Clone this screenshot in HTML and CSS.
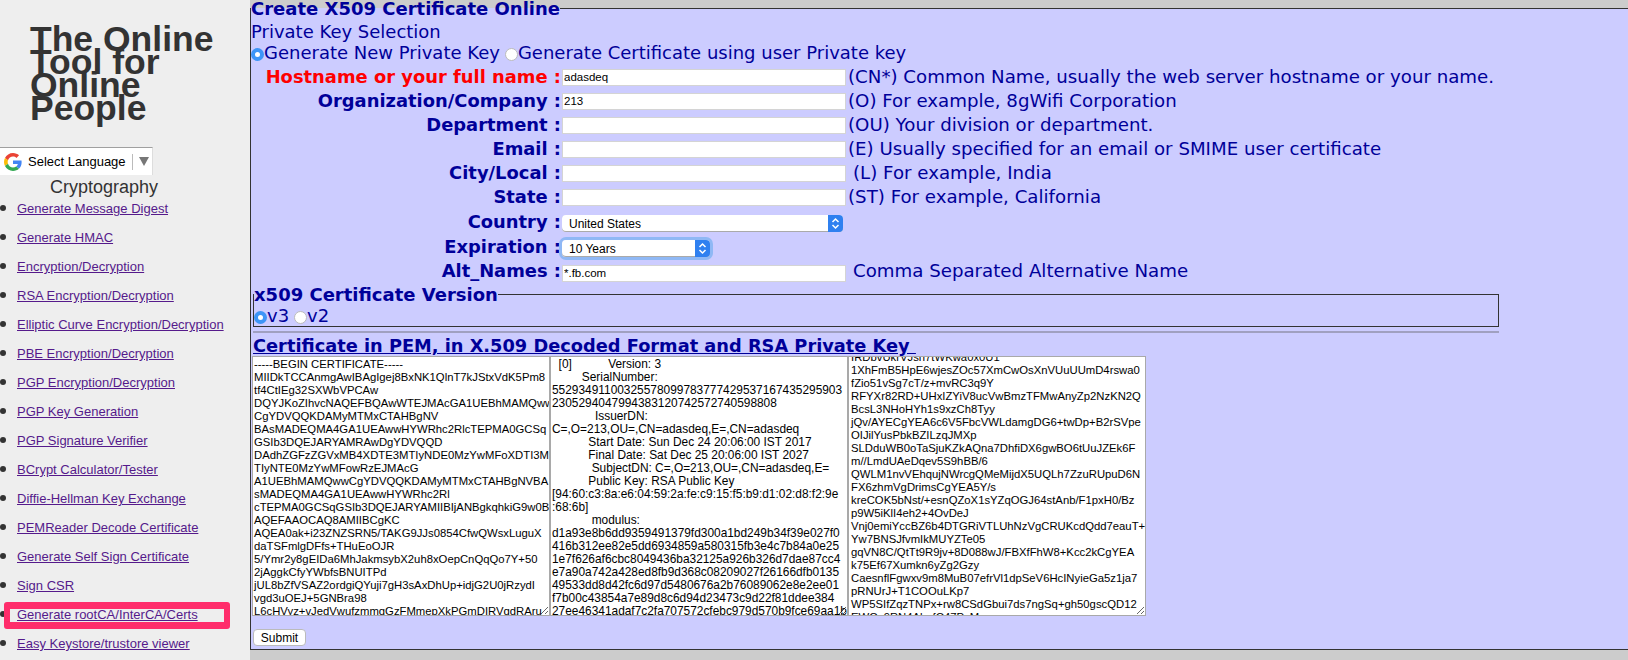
FILE: index.html
```html
<!DOCTYPE html>
<html lang="en">
<head>
    <meta charset="UTF-8">
    <meta name="viewport" content="width=device-width, initial-scale=1.0">
    <title>Create X509 Certificate Online</title>
    <link rel="stylesheet" href="styles.css">
</head>
<body>
    <aside class="sidebar">
        <div class="logo">The Online Tool for Online People</div>

        <div class="lang-picker">
            <svg class="lang-g" viewBox="0 0 48 48" width="18" height="18">
                <path fill="#EA4335" d="M24 9.5c3.5 0 6.7 1.2 9.2 3.6l6.9-6.9C35.9 2.4 30.5 0 24 0 14.6 0 6.5 5.4 2.6 13.2l8 6.2C12.5 13.7 17.800 9.500 24 9.500z"/>
                <path fill="#4285F4" d="M47 24.500c0-1.600-.2-3.100-.4-4.500H24v9h12.900c-.6 3-2.200 5.500-4.700 7.200l7.700 6C44.400 38 47 31.800 47 24.500z"/>
                <path fill="#FBBC05" d="M10.600 28.600c-.5-1.400-.8-3-.8-4.600s.3-3.200.8-4.600l-8-6.200C.9 16.500 0 20.100 0 24s.9 7.500 2.600 10.800l8-6.200z"/>
                <path fill="#34A853" d="M24 48c6.500 0 11.900-2.100 15.900-5.800l-7.700-6c-2.200 1.500-5 2.300-8.200 2.300-6.200 0-11.500-4.200-13.400-9.900l-8 6.200C6.500 42.600 14.600 48 24 48z"/>
            </svg>
            <span class="lang-label">Select Language</span>
            <span class="lang-caret"></span>
        </div>

        <div class="side-title">Cryptography</div>

        <ul class="side-links">
            <li><a href="#">Generate Message Digest</a></li>
            <li><a href="#">Generate HMAC</a></li>
            <li><a href="#">Encryption/Decryption</a></li>
            <li><a href="#">RSA Encryption/Decryption</a></li>
            <li><a href="#">Elliptic Curve Encryption/Decryption</a></li>
            <li><a href="#">PBE Encryption/Decryption</a></li>
            <li><a href="#">PGP Encryption/Decryption</a></li>
            <li><a href="#">PGP Key Generation</a></li>
            <li><a href="#">PGP Signature Verifier</a></li>
            <li><a href="#">BCrypt Calculator/Tester</a></li>
            <li><a href="#">Diffie-Hellman Key Exchange</a></li>
            <li><a href="#">PEMReader Decode Certificate</a></li>
            <li><a href="#">Generate Self Sign Certificate</a></li>
            <li><a href="#">Sign CSR</a></li>
            <li class="marked"><a href="#">Generate rootCA/InterCA/Certs</a></li>
            <li><a href="#">Easy Keystore/trustore viewer</a></li>
        </ul>
    </aside>

    <main class="content">
        <form action="#">
            <fieldset class="cert-box">
                <legend class="box-title">Create X509 Certificate Online</legend>

                <div class="plain-line">Private Key Selection</div>
                <div class="plain-line radios key-radios">
                    <input class="radio" type="radio" name="key_mode" checked><span>Generate New Private Key</span>
                    <input class="radio radio-gap" type="radio" name="key_mode"><span>Generate Certificate using user Private key</span>
                </div>

                <div class="field-row">
                    <label class="field-label required">Hostname or your full name :</label>
                    <input class="field-input" type="text" value="adasdeq">
                    <span class="hint">(CN*) Common Name, usually the web server hostname or your name.</span>
                </div>
                <div class="field-row">
                    <label class="field-label">Organization/Company :</label>
                    <input class="field-input" type="text" value="213">
                    <span class="hint">(O) For example, 8gWifi Corporation</span>
                </div>
                <div class="field-row">
                    <label class="field-label">Department :</label>
                    <input class="field-input" type="text">
                    <span class="hint">(OU) Your division or department.</span>
                </div>
                <div class="field-row">
                    <label class="field-label">Email :</label>
                    <input class="field-input" type="text">
                    <span class="hint">(E) Usually specified for an email or SMIME user certificate</span>
                </div>
                <div class="field-row">
                    <label class="field-label">City/Local :</label>
                    <input class="field-input" type="text">
                    <span class="hint hint-gap">(L) For example, India</span>
                </div>
                <div class="field-row">
                    <label class="field-label">State :</label>
                    <input class="field-input" type="text">
                    <span class="hint">(ST) For example, California</span>
                </div>
                <div class="field-row select-row first-select">
                    <label class="field-label">Country :</label>
                    <div class="select-wrap country">
                        <select class="field-select">
                            <option>United States</option>
                        </select>
                        <svg class="stepper" viewBox="0 0 15 17" width="15" height="17">
                            <path d="M4.500 7 7.500 4 10.500 7M4.500 10 7.500 13 10.500 10" fill="none" stroke="#fff" stroke-width="1.500"/>
                        </svg>
                    </div>
                </div>
                <div class="field-row select-row">
                    <label class="field-label">Expiration :</label>
                    <div class="select-wrap expiry">
                        <select class="field-select">
                            <option>10 Years</option>
                        </select>
                        <svg class="stepper" viewBox="0 0 15 17" width="15" height="17">
                            <path d="M4.500 7 7.500 4 10.500 7M4.500 10 7.500 13 10.500 10" fill="none" stroke="#fff" stroke-width="1.500"/>
                        </svg>
                    </div>
                </div>
                <div class="field-row alt-row">
                    <label class="field-label">Alt_Names :</label>
                    <input class="field-input" type="text" value="*.fb.com">
                    <span class="hint hint-gap">Comma Separated Alternative Name</span>
                </div>

                <fieldset class="version-box">
                    <legend class="box-title">x509 Certificate Version</legend>
                    <div class="plain-line radios">
                        <input class="radio" type="radio" name="version" checked><span>v3</span>
                        <input class="radio radio-gap" type="radio" name="version"><span>v2</span>
                    </div>
                </fieldset>

                <hr class="divider">

                <a class="pem-heading" href="#">Certificate in PEM, in X.509 Decoded Format and RSA Private Key&nbsp;</a>

                <div class="pem-row">
                    <div class="pem-box"><pre class="pem-text">-----BEGIN CERTIFICATE-----
MIIDkTCCAnmgAwIBAgIgej8BxNK1QlnT7kJStxVdK5Pm8
tf4CtIEg32SXWbVPCAw
DQYJKoZIhvcNAQEFBQAwWTEJMAcGA1UEBhMAMQww
CgYDVQQKDAMyMTMxCTAHBgNV
BAsMADEQMA4GA1UEAwwHYWRhc2RlcTEPMA0GCSq
GSIb3DQEJARYAMRAwDgYDVQQD
DAdhZGFzZGVxMB4XDTE3MTIyNDE0MzYwMFoXDTI3M
TIyNTE0MzYwMFowRzEJMAcG
A1UEBhMAMQwwCgYDVQQKDAMyMTMxCTAHBgNVBA
sMADEQMA4GA1UEAwwHYWRhc2Rl
cTEPMA0GCSqGSIb3DQEJARYAMIIBIjANBgkqhkiG9w0B
AQEFAAOCAQ8AMIIBCgKC
AQEA0ak+i23ZNZSRN5/TAKG9JJs0854CfwQWsxLuguX
daTSFmlgDFfs+THuEoOJR
5/Ymr2y8gEIDa6MhJakmsybX2uh8xOepCnQqQo7Y+50
2jAggkCfyYWbfsBNUITPd
jUL8bZfVSAZ2ordgiQYuji7gH3sAxDhUp+idjG2U0jRzydI
vgd3uOEJ+5GNBra98
L6cHVyz+vJedVwufzmmqGzFMmepXkPGmDIRVqdRAru</pre></div>
                    <div class="pem-box pem-decoded"><pre class="pem-text">  [0]           Version: 3
         SerialNumber:
55293491100325578099783777429537167435295903
2305294047994383120742572740598808
             IssuerDN:
C=,O=213,OU=,CN=adasdeq,E=,CN=adasdeq
           Start Date: Sun Dec 24 20:06:00 IST 2017
           Final Date: Sat Dec 25 20:06:00 IST 2027
            SubjectDN: C=,O=213,OU=,CN=adasdeq,E=
           Public Key: RSA Public Key
[94:60:c3:8a:e6:04:59:2a:fe:c9:15:f5:b9:d1:02:d8:f2:9e
:68:6b]
            modulus:
d1a93e8b6dd9359491379fd300a1bd249b34f39e027f0
416b312ee82e5dd6934859a580315fb3e4c7b84a0e25
1e7f626af6cbc8049436ba32125a926b326d7dae87cc4
e7a90a742a428ed8fb9d368c08209027f26166dfb0135
49533dd8d42fc6d97d5480676a2b76089062e8e2ee01
f7b00c43854a7e89d8c6d94d23473c9d22f81ddee384
27ee46341adaf7c2fa707572cfebc979d570b9fce69aa1b</pre></div>
                    <div class="pem-box pem-scrolled"><pre class="pem-text">IRDbvUkrVJsn7tWKwa0x0U1
1XhFmB5HpE6wjesZOc57XmCwOsXnVUuUUmD4rswa0
fZio51vSg7cT/z+mvRC3q9Y
RFYXr82RD+UHxIZYiV8ucVwBmzTFMwAnyZp2NzKN2Q
BcsL3NHoHYh1s9xzCh8Tyy
jQv/AYECgYEA6c6V5FbcVWLdamgDG6+twDp+B2rSVpe
OIJilYusPbkBZILzqJMXp
SLDduWB0oTaSjuKZkAQna7DhfiDX6gwBO6tUuJZEk6F
m//LmdUAeDqev5S9hBB/6
QWLM1nvVEhqujNWrcgQMeMijdX5UQLh7ZzuRUpuD6N
FX6zhmVgDrimsCgYEA5Y/s
kreCOK5bNst/+esnQZoX1sYZqOGJ64stAnb/F1pxH0/Bz
p9W5iKlI4eh2+4OvDeJ
Vnj0emiYccBZ6b4DTGRiVTLUhNzVgCRUKcdQdd7eauT+
Yw7BNSJfvmIkMUYZTe05
gqVN8C/QtTt9R9jv+8D088wJ/FBXfFhW8+Kcc2kCgYEA
k75Ef67Xumkn6yZg2Gzy
CaesnflFgwxv9m8MuB07efrVl1dpSeV6HcINyieGa5z1ja7
pRNUrJ+T1COOuLKp7
WP5SIfZqzTNPx+rw8CSdGbui7ds7ngSq+gh50gscQD12
EWGv9RN4AbqfC47PzMqv</pre></div>
                </div>

                <button class="submit-btn" type="submit">Submit</button>
            </fieldset>
        </form>
    </main>
</body>
</html>
```

FILE: styles.css
```css
html, body{
    height: 660px;
    overflow: hidden;
}

body{
    margin: 0;
    display: flex;
    background-color: #ccc;
}

/* left menu */
.sidebar{
    width: 250px;
    flex-shrink: 0;
    background-color: #eee;
    font-family: "Liberation Sans", Arial, sans-serif;
    color: #333;
}

.logo{
    width: 195px;
    padding: 28px 0 0 30px;
    height: 119px;
    font-size: 35.5px;
    font-weight: bold;
    line-height: 23px;
}

.lang-picker{
    width: 152px;
    height: 27px;
    display: flex;
    align-items: center;
    background-color: #fff;
    border-top: 1px solid #a0a0a0;
    border-right: 1px solid #ddd;
    font-size: 13px;
    color: #000;
}

.lang-g{
    margin-left: 4px;
    flex-shrink: 0;
}

.lang-label{
    margin-left: 6px;
    padding-right: 6px;
    border-right: 1px solid #bbb;
    line-height: 16px;
}

.lang-caret{
    margin-left: 6px;
    border-top: 9px solid #777;
    border-left: 5px solid transparent;
    border-right: 5px solid transparent;
}

.side-title{
    width: 208px;
    height: 18px;
    margin-top: 1px;
    text-align: center;
    font-size: 18px;
    line-height: 22px;
}

.side-links{
    list-style: none;
    margin: 0;
    padding: 0;
    font-size: 13px;
}

.side-links li{
    position: relative;
    height: 29px;
    line-height: 29px;
    padding-left: 17px;
}

.side-links li::before{
    content: "";
    position: absolute;
    left: 0;
    top: 11px;
    width: 6px;
    height: 6px;
    border-radius: 50%;
    background-color: #333;
}

.side-links a{
    color: #551a8b;
}

/* annotation drawn on the screenshot */
.marked::after{
    content: "";
    position: absolute;
    left: 4px;
    top: 2px;
    width: 214px;
    height: 13px;
    border: 6px solid #ff2d6b;
    border-top-width: 7px;
    border-bottom-width: 7px;
    border-radius: 3px;
}

/* main form */
.content{
    flex: 1;
    min-width: 0;
    font-family: "DejaVu Sans", Verdana, sans-serif;
    color: #000099;
}

.cert-box{
    margin: 0;
    padding: 4px 0 0 0;
    height: 650px;
    box-sizing: border-box;
    border: 1px solid #333;
    border-right: none;
    background-color: #ccccff;
}

.box-title{
    padding: 0;
    font-size: 18px;
    font-weight: bold;
    line-height: 17px;
}

.plain-line{
    height: 22px;
    line-height: 22px;
    font-size: 18px;
}

.radios{
    display: flex;
    align-items: center;
}

.key-radios{
    margin: -1px 0 1px;
}

.radio{
    appearance: none;
    width: 13px;
    height: 13px;
    margin: 3px 0 0 0;
    border-radius: 50%;
    background-color: #fff;
    border: 1px solid #bbb;
    box-sizing: border-box;
    flex-shrink: 0;
}

.radio:checked{
    border: 4px solid #3d95f7;
}

.radio-gap{
    margin-left: 5px;
}

.field-row{
    display: flex;
    align-items: center;
    height: 24px;
}

.select-row{
    height: 25px;
}

.first-select{
    margin-top: 2px;
}

.field-label{
    width: 310px;
    flex-shrink: 0;
    padding-bottom: 2px;
    text-align: right;
    font-size: 17.900px;
    font-weight: bold;
}

.select-row .field-label{
    padding-bottom: 4px;
}

.alt-row .field-label, .alt-row .hint{
    padding-bottom: 6px;
}

.required{
    color: #ff0000;
}

.field-input{
    width: 284px;
    height: 17px;
    box-sizing: border-box;
    margin: 0 0 0 1px;
    padding: 0 1px;
    flex-shrink: 0;
    border: 1px solid #d4d4d4;
    background-color: #fff;
    font-family: "Liberation Sans", Arial, sans-serif;
    font-size: 11.500px;
    color: #000;
}

.hint{
    font-size: 18.200px;
    margin-left: 2px;
    padding-bottom: 2px;
    white-space: nowrap;
}

.hint-gap{
    margin-left: 7px;
}

.select-wrap{
    position: relative;
    height: 17px;
    margin-left: 1px;
}

.country{
    width: 281px;
}

.expiry{
    width: 148px;
    border-radius: 4px;
    box-shadow: 0 0 0 3px #8fb8f5;
}

.field-select{
    appearance: none;
    display: block;
    width: 100%;
    height: 17px;
    margin: 0;
    padding: 0 18px 0 7px;
    border: none;
    border-radius: 4px;
    background-color: #fff;
    box-shadow: inset 0 -1px 0 #aaa;
    font-family: "Liberation Sans", Arial, sans-serif;
    font-size: 12px;
    color: #000;
}

.stepper{
    position: absolute;
    right: 0;
    top: 0;
    border-radius: 0 4px 4px 0;
    background-color: #2f80f0;
}

.version-box{
    margin: 1px 0 0 2px;
    padding: 2px 0 0 0;
    width: 1246px;
    height: 41px;
    box-sizing: border-box;
    border: 1px solid #333;
}

.divider{
    width: 1246px;
    margin: 4px 0 0 2px;
    border: none;
    border-top: 2px solid #a0a0c0;
}

.pem-heading{
    display: block;
    margin: 4px 0 0 2px;
    height: 19px;
    line-height: 18px;
    font-size: 17.800px;
    font-weight: bold;
    color: #000099;
}

.pem-row{
    display: flex;
    margin-left: 1px;
}

.pem-box{
    width: 298px;
    height: 260px;
    box-sizing: border-box;
    flex-shrink: 0;
    padding: 1px 0 0 1px;
    overflow: hidden;
    resize: both;
    border: 1px solid #a9a9a9;
    background-color: #fff;
}

.pem-text{
    margin: 0;
    font-family: "Liberation Sans", Arial, sans-serif;
    font-size: 11.300px;
    line-height: 13px;
    color: #000;
}

.pem-decoded .pem-text{
    font-size: 11.900px;
}

.pem-scrolled{
    padding-left: 2px;
}

.pem-scrolled .pem-text{
    margin-top: -7px;
}

.submit-btn{
    display: block;
    margin: 13px 0 0 2px;
    width: 53px;
    height: 17px;
    padding: 0;
    background-color: #fff;
    border: 1px solid #bbb;
    border-radius: 4px;
    font-family: "Liberation Sans", Arial, sans-serif;
    font-size: 12px;
    color: #000;
}
```
